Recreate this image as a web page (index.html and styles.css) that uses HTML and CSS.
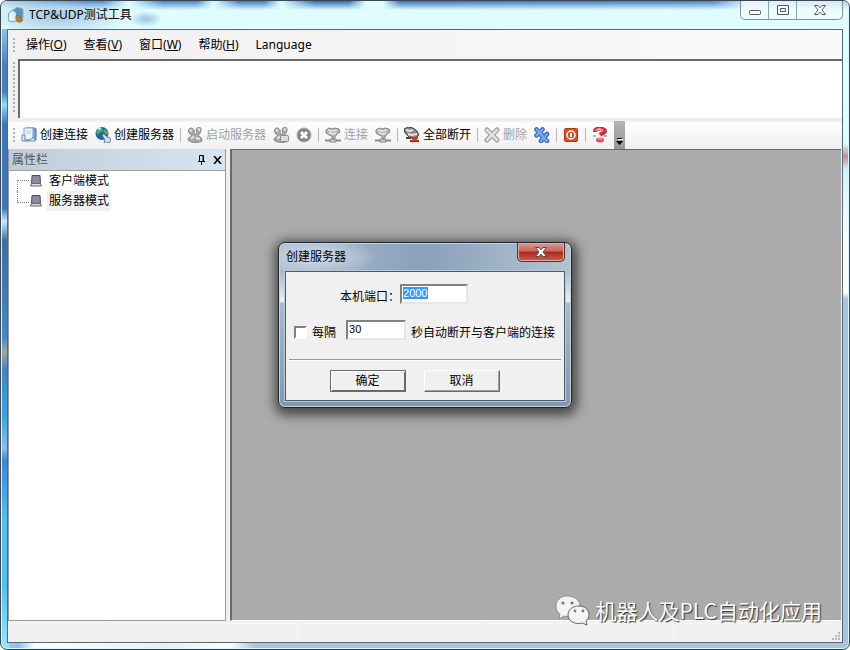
FILE: index.html
```
<!DOCTYPE html>
<html lang="zh-CN">
<head>
    <meta charset="utf-8">
    <title>TCP&amp;UDP测试工具</title>
    <link rel="stylesheet" href="styles.css">
</head>
<body>
    <!-- shared toolbar shapes -->
    <svg class="defs" width="0" height="0" aria-hidden="true">
        <defs>
            <symbol id="people" viewBox="0 0 16 16">
                <path d="M1 13c0-3 2-3 4-4L3 7C0 4 2 1 4 1s4 2 3 5l1 2 2-2C8 3 10 0 12 0s3 3 1 6l-2 3c3 1 4 2 4 5-2 2-12 2-14-1z" fill="#a9a9a9" stroke="#858585"/>
                <path d="M3 3l2 1M11 2l2 1M4 11l3-1M9 11l4 1" stroke="#e8e8e8" stroke-width="2"/>
            </symbol>
            <symbol id="plug" viewBox="0 0 16 16">
                <path d="M1 3l3-2 3 1 3-1 4 1 1 3-3 2-2 3-1 2H7V9L4 8 1 6z" fill="#b4b4b4" stroke="#858585"/>
                <path d="M3 3l4 1 5-1M4 6l4 1 3-1" stroke="#e8e8e8" stroke-width="1.500" fill="none"/>
                <path d="M0 13.500h5M11 13.500h5" stroke="#8c8c8c" stroke-width="2"/>
                <path d="M5 12h6v3H5z" fill="#ccc" stroke="#858585"/>
            </symbol>
            <symbol id="computer" viewBox="0 0 12 12">
                <path d="M2 .5h8l.5 8h-9z" fill="#8a8a9a" stroke="#50505c"/>
                <path d="M1.500 8.500h9l1 2.500H.5z" fill="#dcdce4" stroke="#66666e"/>
            </symbol>
        </defs>
    </svg>

    <div class="window">
        <header class="titlebar">
            <svg class="app-icon" viewBox="0 0 16 16" aria-hidden="true">
                <path d="M5 3l4-3 6 2v9l-4 3-6-2z" fill="#5d8fc0" stroke="#8faecb"/>
                <path d="M1 6l3-3 4 2 1 9-6 1-3-2z" fill="#d9ecfa" stroke="#6e9cc8"/>
                <path d="M3 6v7" stroke="#fff" stroke-width="2"/>
                <path d="M8 9l2-1 2 3 3 2-2 2h-3l-2-3z" fill="#c97834" stroke="#a5683c"/>
            </svg>
            <h1 class="title">TCP&amp;UDP测试工具</h1>
            <div class="window-buttons">
                <button type="button" aria-label="最小化">
                    <svg width="12" height="5" viewBox="0 0 12 5"><rect x=".5" y=".5" width="11" height="4" rx="1" fill="#fff" stroke="#535666"/></svg>
                </button>
                <button type="button" aria-label="最大化">
                    <svg width="12" height="10" viewBox="0 0 12 10"><path d="M.5.5h11v9H.5zM3.500 3.500v3h5v-3z" fill="#fff" fill-rule="evenodd" stroke="#535666"/></svg>
                </button>
                <button type="button" class="wide" aria-label="关闭">
                    <svg width="12" height="10" viewBox="0 0 12 10"><path d="M.5.5h3.500L6 2.800 8 .5h3.500L8 5l3.500 4.500H8L6 7.200 4 9.500H.5L4 5z" fill="#fff" stroke="#535666"/></svg>
                </button>
            </div>
        </header>

        <div class="client">
            <nav class="menubar">
                <span class="grip"></span>
                <button type="button">操作(<u>O</u>)</button>
                <button type="button">查看(<u>V</u>)</button>
                <button type="button">窗口(<u>W</u>)</button>
                <button type="button">帮助(<u>H</u>)</button>
                <button type="button">Language</button>
            </nav>

            <div class="log-row">
                <span class="grip"></span>
                <textarea class="log" aria-label="日志" readonly></textarea>
            </div>

            <div class="toolbar">
                <span class="grip"></span>
                <button type="button">
                    <svg class="icon" viewBox="0 0 16 16"><path d="M4 2l2-1h8l1 1v11H5z" fill="#7ba4de" stroke="#4a73b8"/><path d="M3 1h9v9l-3 3H3z" fill="#edf4ff" stroke="#7d9fd0"/><path d="M5 4h5M5 6h5" stroke="#b6cdec"/><path d="M1 8v6h13v-3h-3l-2 2H4V8z" fill="#dbe9fc" stroke="#6289c4"/></svg>
                    创建连接
                </button>
                <button type="button">
                    <svg class="icon" viewBox="0 0 16 16"><circle cx="7" cy="6.500" r="6.500" fill="#245fae"/><path d="M1 4l4-3 3 1-1 3-3 1-1 3zM9 2l4 2v4l-3-1-2-3z" fill="#46b34d"/><path d="M3 2l3-1" stroke="#c5efff" stroke-width="2"/><path d="M7 8l2-1 3 3 3 1 1 3-3 2H9l1-3z" fill="#d2e1ec" stroke="#63829d"/></svg>
                    创建服务器
                </button>
                <span class="separator"></span>
                <button type="button" disabled>
                    <svg class="icon"><use href="#people"/></svg>
                    启动服务器
                </button>
                <button type="button" aria-label="停止服务器" disabled>
                    <svg class="icon" viewBox="0 0 16 16"><use href="#people" width="16" height="16"/><rect x="7.500" y="8.500" width="8" height="6" rx="1" fill="#ddd" stroke="#888"/></svg>
                </button>
                <button type="button" aria-label="停止" disabled>
                    <svg class="icon" viewBox="0 0 16 16"><circle cx="8" cy="8" r="7" fill="#858585" stroke="#aaa"/><path d="M5 5l6 6M11 5l-6 6" stroke="#fff" stroke-width="3"/></svg>
                </button>
                <span class="separator"></span>
                <button type="button" disabled>
                    <svg class="icon"><use href="#plug"/></svg>
                    连接
                </button>
                <button type="button" aria-label="断开" disabled>
                    <svg class="icon"><use href="#plug"/></svg>
                </button>
                <span class="separator"></span>
                <button type="button">
                    <svg class="icon" viewBox="0 0 16 16"><path d="M0 2l4-2 5 1 4 3 2 4-4 3H6L1 6z" fill="#888" stroke="#444"/><path d="M2 3l4 1 3-1M4 7l4 1 5-1" stroke="#e4e4e4" stroke-width="2" fill="none"/><path d="M2 11h5M6 14h9" stroke="#444" stroke-width="2"/><path d="M6 10l9 5M14 10l-6 5" stroke="#e22b16" stroke-width="2"/></svg>
                    全部断开
                </button>
                <span class="separator"></span>
                <button type="button" disabled>
                    <svg class="icon" viewBox="0 0 16 16"><path d="M3 3l10 10M13 3L3 13" stroke="#959595" stroke-width="5" stroke-linecap="round"/><path d="M3 3l10 10M13 3L3 13" stroke="#dedede" stroke-width="3" stroke-linecap="round"/></svg>
                    删除
                </button>
                <button type="button" aria-label="全部删除">
                    <svg class="icon" viewBox="0 0 16 16"><path d="M2.500 2.500l6 6M8.500 2.500l-6 6M7 8l6 6M13 7l-6 7" stroke="#2454b0" stroke-width="4.500" stroke-linecap="round"/><path d="M2.500 2.500l6 6M8.500 2.500l-6 6M7 8l6 6M13 7l-6 7" stroke="#75aaf0" stroke-width="2.500" stroke-linecap="round"/></svg>
                </button>
                <span class="separator"></span>
                <button type="button" aria-label="退出">
                    <svg class="icon" viewBox="0 0 16 16"><rect x="1.500" y="1.500" width="13" height="13" rx="1" fill="#dd4b22" stroke="#b53916"/><circle cx="8" cy="8" r="4" fill="none" stroke="#fff" stroke-width="1.500"/><path d="M8 6v4" stroke="#fff" stroke-width="2"/></svg>
                </button>
                <span class="separator"></span>
                <button type="button" aria-label="帮助">
                    <svg class="icon" viewBox="0 0 16 16"><path d="M3 5c0-5 10-4 10-1 0 2-3 2-5 4" fill="none" stroke="#d52839" stroke-width="4"/><path d="M4 4c2-3 6-2 7 0" fill="none" stroke="#ff9fa7" stroke-width="2"/><path d="M1 9h3M11 9h4" stroke="#777"/><ellipse cx="8" cy="13" rx="4" ry="2.500" fill="#e94857"/><path d="M6 12h4" stroke="#ffc0c4"/></svg>
                </button>
                <button type="button" class="overflow" aria-label="工具栏选项">
                    <svg width="7" height="7" viewBox="0 0 7 7"><path d="M1 0h5v1H1zM0 3h7L3.500 7z" fill="#000"/><path d="M2 1.500h5" stroke="#fff"/></svg>
                </button>
            </div>

            <main class="main">
                <aside class="panel">
                    <div class="panel-head">
                        <h2>属性栏</h2>
                        <button type="button" aria-label="固定">
                            <svg width="9" height="10" viewBox="0 0 9 10"><path d="M2.500 6V.5h4V6M1 6.500h7M4.500 7v3" fill="none" stroke="#000"/><path d="M6 1v5" stroke="#000"/></svg>
                        </button>
                        <button type="button" aria-label="关闭">
                            <svg width="9" height="8" viewBox="0 0 9 8"><path d="M1 0l7 8M8 0L1 8" stroke="#000" stroke-width="1.600"/></svg>
                        </button>
                    </div>
                    <ul class="tree">
                        <li><svg class="node-icon"><use href="#computer"/></svg><span>客户端模式</span></li>
                        <li class="selected"><svg class="node-icon"><use href="#computer"/></svg><span>服务器模式</span></li>
                    </ul>
                </aside>

                <section class="workspace">
                    <form class="dialog" role="dialog" aria-labelledby="dialogTitle">
                        <div class="dialog-head">
                            <h2 id="dialogTitle">创建服务器</h2>
                            <button type="button" class="dialog-close" aria-label="关闭">
                                <svg width="12" height="10" viewBox="0 0 12 10"><path d="M.5.5h3.500L6 2.800 8 .5h3.500L8 5l3.500 4.500H8L6 7.200 4 9.500H.5L4 5z" fill="#fff" stroke="#5d4850"/></svg>
                            </button>
                        </div>
                        <div class="dialog-body">
                            <div class="field port">
                                <label for="port">本机端口：</label>
                                <input type="text" id="port" name="port" value="2000">
                            </div>
                            <div class="field interval">
                                <input type="checkbox" id="auto" name="auto">
                                <label for="auto">每隔</label>
                                <input type="text" id="seconds" name="seconds" value="30">
                                <label for="seconds">秒自动断开与客户端的连接</label>
                            </div>
                            <hr>
                            <div class="actions">
                                <button type="submit" class="default">确定</button>
                                <button type="button">取消</button>
                            </div>
                        </div>
                    </form>
                </section>
            </main>

            <footer class="statusbar">
                <span class="pane first"></span>
                <span class="pane"></span>
                <span class="pane"></span>
                <span class="pane"></span>
                <span class="pane last"></span>
                <svg width="9" height="9" viewBox="0 0 9 9" aria-hidden="true"><path d="M7 1h2M4 4h2M7 4h2M1 7h2M4 7h2M7 7h2" stroke="#b8b8b8" stroke-width="2"/></svg>
            </footer>
        </div>

        <div class="watermark">
            <svg width="36" height="32" viewBox="0 0 36 32" aria-hidden="true">
                <path d="M12 1C5 1 1 6 1 11c0 4 2 7 4 8l-1 5 5-3c9 2 16-3 16-10C25 5 19 1 12 1z" fill="#f4f4f4" stroke="#777" stroke-width=".7"/>
                <circle cx="8" cy="8" r="1.600" fill="#777"/><circle cx="17" cy="8" r="1.600" fill="#777"/>
                <path d="M24 11c-7 0-11 4-11 9 0 6 7 10 14 8l5 2-1-4c2-2 3-4 3-6 0-5-4-9-10-9z" fill="#f4f4f4" stroke="#555" stroke-width=".9"/>
                <circle cx="20" cy="16" r="1.400" fill="#777"/><circle cx="28" cy="16" r="1.400" fill="#777"/>
            </svg>
            <span>机器人及PLC自动化应用</span>
        </div>
    </div>

    <script>
        // start with the port number selected
        const port = document.getElementById('port');
        port.focus();
        port.select();

        document.querySelector('.dialog').addEventListener('submit', function(event) {
            event.preventDefault();
        });
    </script>
</body>
</html>
```
FILE: styles.css
```
* {
    box-sizing: border-box;
}

body {
    margin: 0;
    background: #fff;
    color: #000;
    font: 12px/16px "Noto Sans", "Noto Sans CJK SC", sans-serif;
}

button {
    padding: 0;
    border: 0;
    background: none;
    color: inherit;
    font: inherit;
}

h1, h2 {
    margin: 0;
    font-size: 12px;
    font-weight: normal;
}

svg {
    display: block;
    flex: none;
}

.defs {
    position: absolute;
}

/* Window frame */
.window {
    position: relative;
    display: flex;
    flex-direction: column;
    min-height: 100vh;
    padding: 0 6px 6px;
    border: 1px solid #3b4655;
    border-radius: 7px;
    box-shadow: inset 0 0 0 1px #d5f6fc;
    background:
        linear-gradient(#c4dfee 0%, #7bb0df 6%, #4a7cc0 10%, #4a7cc0 14%, #8fdcf5 16%, #3c75bc 19%, #3c75bc 32%, #c9e9ff 34%, #3c6da5 37%, #4388ce 52%, #9aa99f 54%, #3f86c8 57%, #38a3e4 64%, #86bff0 69%, #3886dc 71%, #4fc0f5 80%, #4fc0f5 90%, #9ae5fc 100%) left / 8px 100% no-repeat,
        linear-gradient(#e1ffff 0%, #dffcff 22%, #c68b91 24%, #cff3ff 26%, #fafefe 36%, #fafefe 45%, #aac2da 46%, #aac2da 100%) right / 8px 100% no-repeat,
        linear-gradient(90deg, #8edffa 0%, #8dbcec 2%, #fff 4%, #eee 20%, #fff 27%, #a9c4dc 30%, #a9c4dc 100%) bottom / 100% 8px no-repeat,
        #dffcfe;
}

.titlebar {
    display: flex;
    align-items: center;
    height: 28px;
    margin: 0 -5px;
    padding-left: 6px;
    border-radius: 6px 6px 0 0;
    background:
        radial-gradient(ellipse 70px 20px at 55px 16px, #a5c7e0, transparent),
        radial-gradient(ellipse 16px 8px at 144px 18px, #9fc2dd, transparent),
        linear-gradient(#dffcfe00, #dffcfe 9px),
        linear-gradient(90deg, #b5d4e5 0%, #3f82cc 10%, #4e8cd0 12%, #dff 15%, #4383cc 19%, #4383cc 23%, #dff 25%, #3f7cc6 28%, #3f7cc6 31%, #dff 33%, #2d6ab8 37%, #2d6ab8 41%, #dff 43%, #dff 45%, #3472bf 47%, #4583cc 84%, #dce9f6 88%, #b4cfea 100%);
}

.app-icon {
    width: 16px;
    height: 16px;
}

.title {
    flex: 1;
    padding-left: 5px;
}

.window-buttons {
    display: flex;
    align-self: flex-start;
    height: 19px;
    margin-right: 5px;
    border: 1px solid #7f929f;
    border-top: 0;
    border-radius: 0 0 5px 5px;
    background: #ffffff66;
}

.window-buttons button {
    display: flex;
    align-items: center;
    justify-content: center;
    width: 28px;
    border-right: 1px solid #8da1ae;
}

.window-buttons button:first-child {
    padding-top: 5px;
}

.window-buttons .wide {
    width: 45px;
    border-right: 0;
}

.client {
    flex: 1;
    display: flex;
    flex-direction: column;
    border: 1px solid #596873;
    background: #f0f0f0;
}

.grip {
    width: 2px;
    background: repeating-linear-gradient(#b4b4b4 0 2px, transparent 2px 4px);
}

/* Menu */
.menubar {
    display: flex;
    align-items: center;
    gap: 17px;
    height: 29px;
    padding-left: 5px;
    background: linear-gradient(90deg, #f0f0f0, #fafafa);
}

.menubar .grip {
    height: 14px;
    margin-right: -6px;
}

.log-row {
    display: flex;
    gap: 3px;
    height: 60px;
    padding: 0 0 1px 5px;
}

.log-row .grip {
    margin: 3px 0 5px;
}

.log {
    flex: 1;
    min-width: 0;
    padding: 2px;
    border: 0 solid #696969;
    border-width: 2px 0 0 2px;
    background: #fff;
    resize: none;
    outline: 0;
}

/* Toolbar */
.toolbar {
    display: flex;
    align-items: center;
    gap: 1px;
    height: 30px;
    padding: 2px 0 0 5px;
    background: linear-gradient(#f0f0f0 2px, #fdfdfd 4px, #f0f0f0);
}

.toolbar .grip {
    height: 14px;
    margin-right: 2px;
}

.toolbar button {
    display: flex;
    align-items: center;
    gap: 3px;
    height: 22px;
    padding: 0 3px;
    white-space: nowrap;
}

.toolbar button:disabled {
    color: #a2a2a2;
}

.icon {
    width: 16px;
    height: 16px;
}

.separator {
    width: 1px;
    height: 14px;
    margin: 0 2px;
    background: #b8b8b8;
}

.toolbar .overflow {
    align-self: stretch;
    align-items: flex-end;
    height: auto;
    margin-left: 2px;
    padding: 0 2px 4px;
    background: linear-gradient(#b5b5b5, #969696);
}

/* Content */
.main {
    flex: 1;
    display: flex;
    gap: 4px;
    min-height: 470px;
}

.panel {
    display: flex;
    flex-direction: column;
    width: 218px;
    border: 1px solid #999;
    border-top: 0;
    background: #fff;
}

.panel-head {
    display: flex;
    align-items: center;
    gap: 7px;
    height: 22px;
    padding: 0 3px;
    border-bottom: 1px solid #a0a0a0;
    background: linear-gradient(90deg, #bfcddb, #d7e4f2);
    color: #52565c;
}

.panel-head h2 {
    flex: 1;
}

.tree {
    margin: 0;
    padding: 0 0 0 8px;
    list-style: none;
}

.tree li {
    display: flex;
    align-items: center;
    height: 20px;
}

.tree li::before {
    content: "";
    align-self: flex-end;
    width: 11px;
    height: 10px;
    border: 1px dotted #888;
    border-width: 1px 0 0 1px;
}

.tree li.selected::before {
    align-self: flex-start;
    height: 11px;
    border-width: 0 0 1px 1px;
}

.tree span {
    margin-left: 5px;
    padding: 2px;
}

.selected span {
    background: #f0f0f0;
}

.node-icon {
    width: 12px;
    height: 12px;
    margin-left: 1px;
}

.workspace {
    flex: 1;
    position: relative;
    margin-right: 1px;
    border: 1px solid #696969;
    border-width: 1px 0 0 2px;
    border-bottom: 1px solid #fff;
    background: #ababab;
}

/* Dialog */
.dialog {
    position: absolute;
    top: 92px;
    left: 46px;
    width: 294px;
    padding: 0 6px 6px;
    border: 1px solid #1d242c;
    border-radius: 7px;
    background:
        radial-gradient(ellipse 60px 20px at 38px 14px, #d3deea, transparent),
        linear-gradient(#c7d5e300 0 30px, #e3ebf3 56px, #e3ebf3 59px, #a9bbcd 60px, #7f98b1),
        linear-gradient(90deg, #a9bccf, #8aa1bb 50%, #b2c3d3);
    box-shadow: inset 0 0 0 1px #c9d6e2, 1px 3px 12px 4px #0009;
}

.dialog-head {
    display: flex;
    align-items: center;
    height: 28px;
}

.dialog-head h2 {
    flex: 1;
    padding-left: 1px;
}

.dialog-close {
    display: flex;
    align-items: center;
    justify-content: center;
    align-self: flex-start;
    width: 48px;
    height: 19px;
    border: 1px solid #5c2a2a;
    border-top: 0;
    border-radius: 0 0 5px 5px;
    box-shadow: inset 0 0 0 1px #e5aca3;
    background: linear-gradient(#dc9c91, #c5655a 45%, #a9281a 50%, #cf5e48);
}

.dialog-body {
    padding: 12px 3px 8px;
    border: 1px solid #4c5b69;
    box-shadow: 0 0 0 1px #b9c9d8;
    background: #f0f0f0;
}

.field {
    display: flex;
    align-items: center;
    height: 20px;
}

.field input[type="text"] {
    height: 20px;
    padding: 0 1px 3px;
    border: 2px solid;
    border-color: #808080 #e6e6e6 #e6e6e6 #808080;
    background: #fff;
    font: 11px/13px "Liberation Sans", Arial, sans-serif;
    outline: 0;
}

.field input::selection {
    background: #3399ff;
    color: #fff;
}

.field input[type="checkbox"] {
    appearance: none;
    width: 13px;
    height: 13px;
    margin: 5px 5px 0 0;
    border: 2px solid;
    border-color: #808080 #fff #fff #808080;
    background: #fff;
}

.field input[type="checkbox"]:checked {
    background: #333;
}

.field label {
    padding-top: 5px;
}

.port {
    padding-left: 51px;
}

.port input {
    width: 68px;
}

.interval {
    margin-top: 16px;
    padding-left: 5px;
}

.interval input[type="text"] {
    width: 60px;
    margin: 0 5px 0 10px;
}

hr {
    height: 2px;
    margin: 19px 0 9px;
    border: 0;
    border-top: 1px solid #999;
    border-bottom: 1px solid #fff;
}

.actions {
    display: flex;
    justify-content: center;
    gap: 18px;
    padding-right: 21px;
}

.actions button {
    width: 76px;
    height: 22px;
    border: 1px solid;
    border-color: #fff #696969 #696969 #fff;
    box-shadow: inset -1px -1px #a0a0a0;
}

.actions .default {
    border-color: #696969;
    box-shadow: inset 1px 1px #fff, inset -1px -1px #696969;
}

/* Status bar */
.statusbar {
    display: flex;
    align-items: flex-end;
    gap: 2px;
    height: 21px;
    padding: 2px 2px 1px 0;
}

.pane {
    flex: 0 1 186px;
    align-self: stretch;
    border: 1px solid #f6f6f6;
    border-width: 1px 1px 0 0;
}

.pane.first {
    flex: 0 0 102px;
}

.pane.last {
    flex: 1;
    border-right: 0;
}

.watermark {
    position: absolute;
    right: 27px;
    bottom: 22px;
    display: flex;
    align-items: flex-start;
    gap: 5px;
    color: #fff;
    font-family: "Noto Sans CJK SC", sans-serif;
    font-size: 21px;
    line-height: 30px;
    text-shadow: 1px 1px 1px #333;
}
```
